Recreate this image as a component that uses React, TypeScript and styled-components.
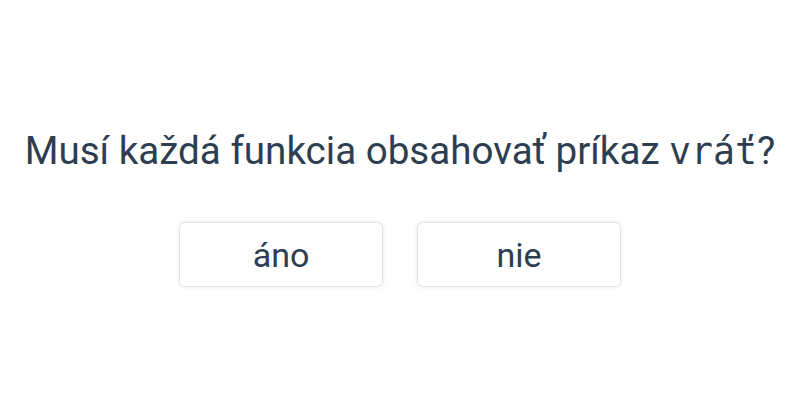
import React from "react";
import styled, { createGlobalStyle } from "styled-components";

const Global = createGlobalStyle`
  html, body { margin: 0; padding: 0; background: #ffffff; }
  body { font-family: Roboto, "Noto Sans", sans-serif; color: #2c3e50; }
`;

const Page = styled.div`
  width: 800px;
  height: 400px;
  display: flex;
  flex-direction: column;
  align-items: center;
  justify-content: center;
  box-sizing: border-box;
  padding-top: 15px;
`;

const Question = styled.h1`
  margin: 0;
  font-size: 38.6px;
  font-weight: 400;
  line-height: 46px;
  white-space: nowrap;
  color: #2c3e50;
`;

const Code = styled.code`
  font-family: "DejaVu Sans Mono", monospace;
  font-size: 36.5px;
`;

const Answers = styled.div`
  display: flex;
  gap: 34px;
  margin-top: 47px;
`;

const AnswerButton = styled.button`
  width: 204px;
  height: 65px;
  box-sizing: border-box;
  background: #ffffff;
  border: 1px solid #e4e4e4;
  border-radius: 6px;
  box-shadow: 0 0 4px rgba(0, 0, 0, 0.1);
  font-family: Roboto, sans-serif;
  font-size: 34px;
  color: #2c3e50;
  cursor: pointer;
  padding: 0;
`;

export default function App() {
  return (
    <>
      <Global />
      <Page>
        <Question>
          Musí každá funkcia obsahovať príkaz <Code>vráť</Code>?
        </Question>
        <Answers>
          <AnswerButton>áno</AnswerButton>
          <AnswerButton>nie</AnswerButton>
        </Answers>
      </Page>
    </>
  );
}
